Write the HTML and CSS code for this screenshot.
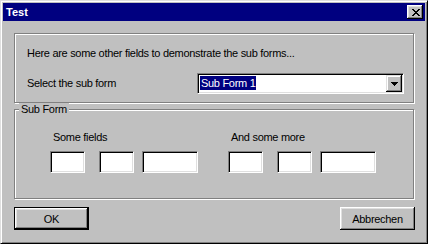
FILE: index.html
```html
<!DOCTYPE html>
<html lang="en">

<head>
    <meta charset="UTF-8">
    <title>Test</title>
    <link rel="stylesheet" href="styles.css">
</head>

<body>

    <div class="window">
        <div class="titlebar">
            <span class="title">Test</span>
            <button class="close-btn" title="Close">
                <svg width="8" height="7" viewBox="0 0 8 7" shape-rendering="crispEdges">
                    <path d="M0 0h2v1H0z M6 0h2v1H6z M1 1h2v1H1z M5 1h2v1H5z M2 2h4v1H2z M3 3h2v1H3z M2 4h4v1H2z M1 5h2v1H1z M5 5h2v1H5z M0 6h2v1H0z M6 6h2v1H6z" fill="#000"/>
                </svg>
            </button>
        </div>

        <div class="client">
            <!-- top group: choose the sub form -->
            <div class="group group-top">
                <p class="intro">Here are some other fields to demonstrate the sub forms...</p>
                <div class="select-row">
                    <span class="select-label">Select the sub form</span>
                    <div class="combo">
                        <span class="combo-value"><span class="selected">Sub Form 1</span></span>
                        <span class="combo-btn">
                            <svg width="7" height="4" viewBox="0 0 7 4" shape-rendering="crispEdges">
                                <path d="M0 0h7v1H0z M1 1h5v1H1z M2 2h3v1H2z M3 3h1v1H3z" fill="#000"/>
                            </svg>
                        </span>
                    </div>
                </div>
            </div>

            <!-- sub form group -->
            <div class="group group-sub">
                <span class="legend">Sub Form</span>
                <div class="sub-cols">
                    <div class="sub-col">
                        <span class="col-label">Some fields</span>
                        <div class="fields">
                            <input class="field short" type="text">
                            <input class="field short gap-wide" type="text">
                            <input class="field long gap-narrow" type="text">
                        </div>
                    </div>
                    <div class="sub-col">
                        <span class="col-label">And some more</span>
                        <div class="fields">
                            <input class="field short" type="text">
                            <input class="field short gap-wide" type="text">
                            <input class="field long gap-narrow" type="text">
                        </div>
                    </div>
                </div>
            </div>

            <div class="buttons">
                <button class="btn default">OK</button>
                <button class="btn">Abbrechen</button>
            </div>
        </div>
    </div>

</body>

</html>
```

FILE: styles.css
```css
body {
    margin: 0;
    padding: 0;
    background-color: #c0c0c0;
    font-family: 'Liberation Sans', Arial, sans-serif;
    font-size: 11px;
    line-height: 13px;
    letter-spacing: -0.3px;
    color: #000;
}

.window {
    width: 428px;
    height: 244px;
    box-sizing: border-box;
    padding: 2px;
    background-color: #c0c0c0;
    border: 1px solid;
    border-color: #dfdfdf #000 #000 #dfdfdf;
    box-shadow: inset 1px 1px #fff, inset -1px -1px #808080;
}

.titlebar {
    height: 18px;
    background-color: #000080;
    color: white;
    display: flex;
    align-items: center;
    justify-content: space-between;
    padding: 0 2px 0 3px;
}

.title {
    font-weight: bold;
    letter-spacing: 0;
}

.close-btn {
    width: 16px;
    height: 14px;
    padding: 0 0 0 1px;
    border: none;
    background-color: #c0c0c0;
    display: flex;
    align-items: center;
    justify-content: center;
    box-shadow: inset -1px -1px #000, inset 1px 1px #fff, inset -2px -2px #808080, inset 2px 2px #dfdfdf;
}

.client {
    padding: 12px 10px 0 11px;
}

/* etched group frame */
.group {
    box-sizing: border-box;
    width: 400px;
    border: 1px solid #808080;
    box-shadow: 1px 1px 0 #fff, inset 1px 1px 0 #fff;
}

.group-top {
    height: 70px;
    padding: 13px 9px 0 12px;
}

.intro {
    margin: 0;
}

.select-row {
    display: flex;
    align-items: center;
    margin-top: 13px;
}

.select-label {
    width: 170px;
}

.combo {
    box-sizing: border-box;
    width: 207px;
    height: 21px;
    display: flex;
    padding: 1px;
    background-color: white;
    border: 1px solid;
    border-color: #808080 #fff #fff #808080;
    box-shadow: inset 1px 1px #000, inset -1px -1px #dfdfdf;
}

.combo-value {
    flex: 1;
    padding: 1px 0 0 1px;
}

.selected {
    display: inline-block;
    background-color: #000080;
    color: white;
    padding: 0 1px;
    line-height: 14px;
}

.combo-btn {
    box-sizing: border-box;
    width: 16px;
    height: 17px;
    background-color: #c0c0c0;
    display: flex;
    align-items: center;
    justify-content: center;
    box-shadow: inset -1px -1px #000, inset 1px 1px #dfdfdf, inset -2px -2px #808080, inset 2px 2px #fff;
}

.group-sub {
    position: relative;
    height: 90px;
    margin-top: 6px;
    padding: 21px 0 0 35px;
}

.legend {
    position: absolute;
    left: 4px;
    top: -7px;
    padding: 0 2px;
    background-color: #c0c0c0;
}

.sub-cols {
    display: flex;
    gap: 30px;
}

.sub-col {
    display: flex;
    flex-direction: column;
}

.col-label {
    padding-left: 3px;
}

.fields {
    display: flex;
    margin-top: 7px;
}

.field {
    box-sizing: border-box;
    height: 22px;
    margin: 0;
    padding: 0;
    background-color: white;
    border: 1px solid;
    border-color: #808080 #fff #fff #808080;
    box-shadow: inset 1px 1px #000, inset -1px -1px #dfdfdf;
    outline: none;
}

.short {
    width: 35px;
}

.long {
    width: 56px;
}

.gap-wide {
    margin-left: 14px;
}

.gap-narrow {
    margin-left: 8px;
}

.buttons {
    width: 401px;
    display: flex;
    justify-content: space-between;
    margin-top: 8px;
}

.btn {
    box-sizing: border-box;
    width: 75px;
    height: 23px;
    padding: 0;
    border: none;
    background-color: #c0c0c0;
    font-family: inherit;
    font-size: 11px;
    letter-spacing: -0.3px;
    color: #000;
    box-shadow: inset -1px -1px #000, inset 1px 1px #fff, inset -2px -2px #808080, inset 2px 2px #dfdfdf;
}

.btn.default {
    border: 1px solid #000;
    box-shadow: inset -1px -1px #000, inset 1px 1px #fff, inset -2px -2px #808080, inset 2px 2px #dfdfdf;
}
```
